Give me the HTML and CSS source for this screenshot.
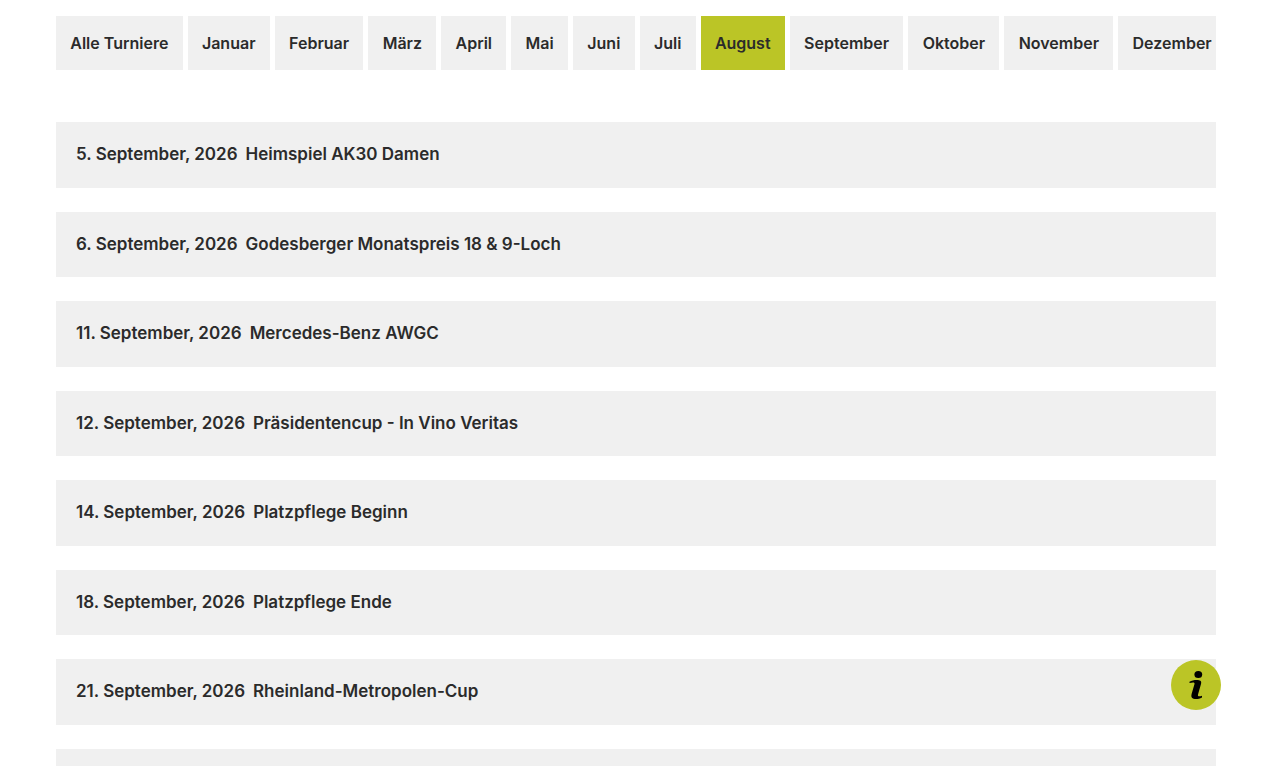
FILE: index.html
```html
<!DOCTYPE html>
<html lang="de">
<head>
<meta charset="utf-8">
<meta name="viewport" content="width=device-width, initial-scale=1">
<title>Turniere</title>
<link rel="stylesheet" href="styles.css">
</head>
<body>
<main class="page">
  <nav class="months" aria-label="Monate">
    <div class="months-track">
      <button class="month" type="button">Alle Turniere</button>
      <button class="month" type="button">Januar</button>
      <button class="month" type="button">Februar</button>
      <button class="month" type="button">März</button>
      <button class="month" type="button">April</button>
      <button class="month" type="button">Mai</button>
      <button class="month" type="button">Juni</button>
      <button class="month" type="button">Juli</button>
      <button class="month month-active" type="button" aria-pressed="true">August</button>
      <button class="month" type="button">September</button>
      <button class="month" type="button">Oktober</button>
      <button class="month" type="button">November</button>
      <button class="month" type="button">Dezember</button>
    </div>
  </nav>
  <div class="events">
    <button class="event" type="button"><span>5. September, 2026</span><span>Heimspiel AK30 Damen</span></button>
    <button class="event" type="button"><span>6. September, 2026</span><span>Godesberger Monatspreis 18 &amp; 9-Loch</span></button>
    <button class="event" type="button"><span>11. September, 2026</span><span>Mercedes-Benz AWGC</span></button>
    <button class="event" type="button"><span>12. September, 2026</span><span>Präsidentencup - In Vino Veritas</span></button>
    <button class="event" type="button"><span>14. September, 2026</span><span>Platzpflege Beginn</span></button>
    <button class="event" type="button"><span>18. September, 2026</span><span>Platzpflege Ende</span></button>
    <button class="event" type="button"><span>21. September, 2026</span><span>Rheinland-Metropolen-Cup</span></button>
    <div class="event"></div>
  </div>
</main>
<button class="info" type="button" aria-label="Informationen">
  <svg class="info-icon" viewBox="0 0 50 50" aria-hidden="true">
    <ellipse cx="27.3" cy="14.500" rx="3.900" ry="3.500"/>
    <path d="M18.500 21.700C21 20.200 25 19.800 28 20.200C30.300 20.500 30.500 22 30 24L27 34.500C26.500 36.500 28 36.800 31 35.800V37.500C28 39 25 39.300 22.500 38.700C20.300 38 20 36.500 20.600 34L23.500 24C23.900 22.300 22.500 22 18.500 23Z"/>
  </svg>
</button>
</body>
</html>
```
FILE: styles.css
```css
* { box-sizing: border-box; }
html { overflow: hidden; }
body {
  margin: 0;
  height: 100vh;
  overflow: hidden;
  background: #fff;
  color: #2b2b2b;
  font-family: Inter, "Liberation Sans", sans-serif;
  line-height: 1.5;
}
button { border: 0; font: inherit; color: inherit; cursor: pointer; }
.page { padding: 16px 54px 0 56px; }
.months { overflow: hidden; }
.months-track { display: flex; gap: 5px; margin-right: -10px; }
.month {
  flex: 1 0 auto;
  padding: 15px 14px;
  background: #f0f0f0;
  font-size: 16px;
  font-weight: 600;
  white-space: nowrap;
}
.month-active { background: #bbc526; }
.events { display: grid; gap: 24px; margin-top: 52px; }
.event {
  display: flex;
  gap: 8px;
  padding: 20px;
  background: #f0f0f0;
  font-size: 17px;
  font-weight: 600;
  text-align: left;
}
.info {
  position: fixed;
  right: 49px;
  bottom: 56px;
  width: 50px;
  height: 50px;
  padding: 0;
  border-radius: 50%;
  background: #bbc526;
}
.info-icon { display: block; width: 50px; height: 50px; fill: #000; }
```
